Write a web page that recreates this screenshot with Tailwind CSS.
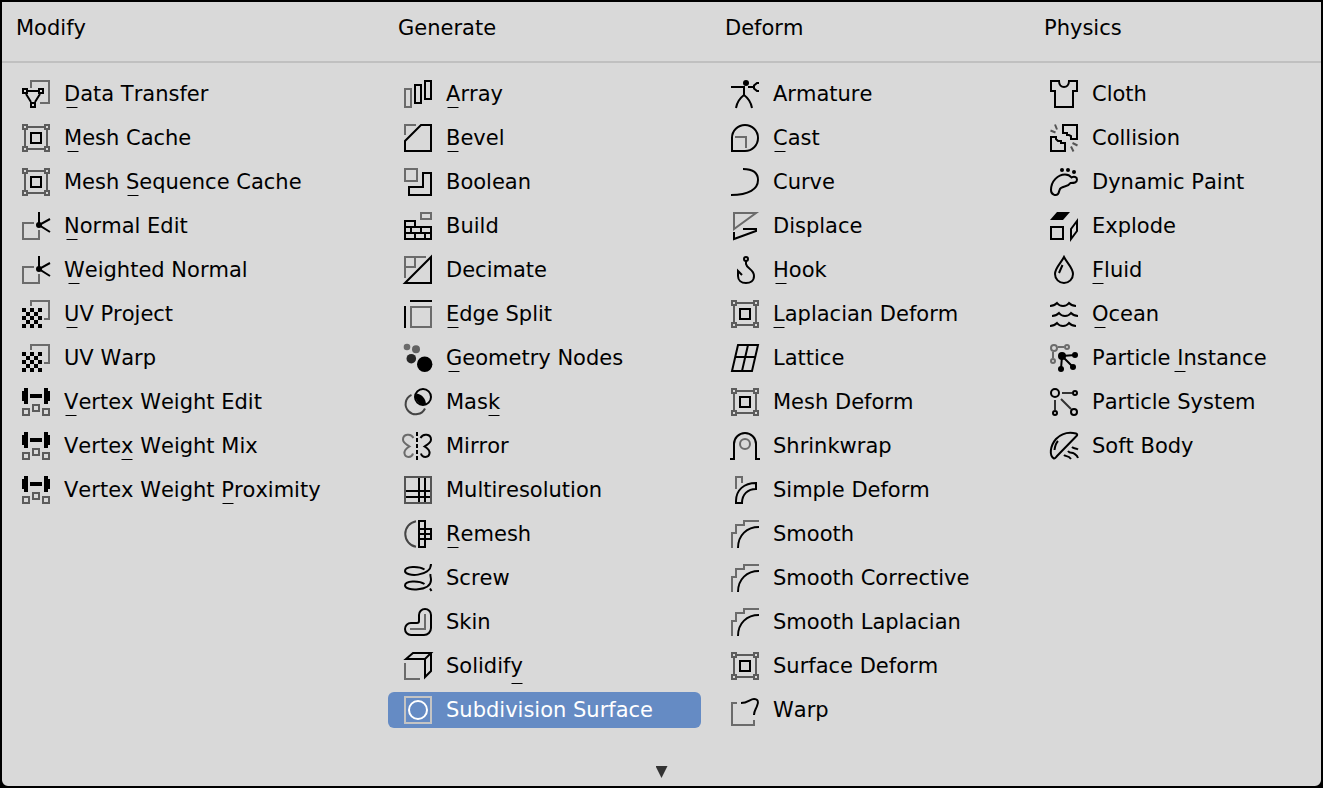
<!DOCTYPE html>
<html lang="en">
<head>
<meta charset="utf-8">
<title>Add Modifier</title>
<script src="https://cdn.jsdelivr.net/npm/@tailwindcss/browser@4"></script>
</head>
<body class="bg-black">

<!-- Icon set, 28 x 28 grid, two-pixel strokes -->
<svg class="hidden" aria-hidden="true">
  <symbol id="transfer" viewBox="0 0 28 28"><path class="stroke-[#6b6b6b]" d="M9 8V1H27V23H18"/><path d="M5 11H17M4 14L9 22M18 14L13 22"/><path d="M1 9H5V13H1ZM17 9H21V13H17ZM9 23H13V27H9Z"/></symbol>
  <symbol id="cage" viewBox="0 0 28 28"><path class="stroke-[#5c5c5c]" d="M1 1H5V5H1ZM23 1H27V5H23ZM1 23H5V27H1ZM23 23H27V27H23ZM6 3H22M6 25H22M3 6V22M25 6V22"/><path d="M9 9H19V19H9Z"/></symbol>
  <symbol id="normal" viewBox="0 0 28 28"><path class="stroke-[#6b6b6b]" d="M12 11H1V27H17V18"/><path d="M17 13V0M28 7L17 13L28 20"/><circle cx="17" cy="13" r="2" fill="currentColor"/></symbol>
  <symbol id="uv" viewBox="0 0 28 28"><path class="stroke-[#6b6b6b]" d="M9 6V1H27V19H22"/><path stroke="none" fill="currentColor" d="M0 8h4v4h-4zM8 8h4v4h-4zM16 8h4v4h-4zM4 12h4v4h-4zM12 12h4v4h-4zM0 16h4v4h-4zM8 16h4v4h-4zM16 16h4v4h-4zM4 20h4v4h-4zM12 20h4v4h-4zM0 24h4v4h-4zM8 24h4v4h-4zM16 24h4v4h-4z"/></symbol>
  <symbol id="weight" viewBox="0 0 28 28"><path stroke="none" fill="currentColor" d="M0 3H2V0H6V16H2V13H0ZM8 6H20V10H8ZM22 0H26V3H28V13H26V16H22Z"/><path class="stroke-[#5c5c5c]" d="M1 21H7V27H1ZM11 17H17V23H11ZM21 21H27V27H21Z"/></symbol>
  <symbol id="array" viewBox="0 0 28 28"><path class="stroke-[#6b6b6b]" d="M1 9H7V27H1Z"/><path d="M11 5H17V23H11ZM21 1H27V19H21Z"/></symbol>
  <symbol id="bevel" viewBox="0 0 28 28"><path class="stroke-[#6b6b6b]" d="M1 11V1H12"/><path d="M1 27V17L17 1H27V27Z"/></symbol>
  <symbol id="boolean" viewBox="0 0 28 28"><path class="stroke-[#6b6b6b]" d="M1 1H13V13H1Z"/><path d="M19 5H27V27H5V19H19Z"/></symbol>
  <symbol id="build" viewBox="0 0 28 28"><path class="stroke-[#6b6b6b]" d="M17 1H27V7H17Z"/><path d="M1 15V9H11V15M1 15H27V27H1ZM1 21H27M7 15V21M17 15V21M11 21V27M21 21V27"/></symbol>
  <symbol id="decimate" viewBox="0 0 28 28"><path class="stroke-[#6b6b6b]" d="M1 22V1H22M1 11H11V1"/><path d="M1 27L27 1V27Z"/></symbol>
  <symbol id="edgesplit" viewBox="0 0 28 28"><path class="stroke-[#6b6b6b]" d="M7 7H27V27H7Z"/><path d="M6 1H28M1 6V28"/></symbol>
  <symbol id="geometry" viewBox="0 0 28 28" stroke="none"><circle cx="3" cy="3" r="3.3" fill="#6b6b6b"/><circle cx="12" cy="5.3" r="4" fill="#626262"/><circle cx="7.3" cy="14.7" r="4.8" fill="#262626"/><circle cx="20.7" cy="20.3" r="7.7" fill="currentColor"/></symbol>
  <symbol id="mask" viewBox="0 0 28 28"><path class="stroke-[#444]" d="M7.500 6.800A10.200 10.200 0 1 0 21 20.500"/><circle cx="19" cy="9" r="8"/><path fill="currentColor" stroke="none" d="M12.500 5.500C18 6 22 11 22 16.500A8 8 0 0 1 12.500 5.500Z"/></symbol>
  <symbol id="mirror" viewBox="0 0 28 28"><path stroke-dasharray="4 2" d="M13 0V28"/><path d="M16.500 6C19 1 27 2 27 7.500C27 11 24 12 20.500 14.500C24 16.500 26 18.500 25.500 21.500C25 26 18 26 17 21.500"/><path class="stroke-[#6b6b6b]" d="M9.500 6C7 1 -1 2 -1 7.500C-1 11 2 12 5.500 14.500C2 16.500 0 18.500 .5 21.500C1 26 8 26 9 21.500"/></symbol>
  <symbol id="multires" viewBox="0 0 28 28"><path class="stroke-[#555]" d="M1 1H27V27H1Z"/><path d="M15 2V26M21 2V26M2 15H26M2 21H26"/></symbol>
  <symbol id="remesh" viewBox="0 0 28 28"><path class="stroke-[#444]" d="M12 1.200A13 13 0 0 0 12 26.800"/><path d="M15 1H21V27H15ZM15 9H27V19H15M27 9V19M15 14H27"/></symbol>
  <symbol id="screw" viewBox="0 0 28 28"><path d="M20.500 5.500C15 2 1 2 1 7C1 13 27 13 27 0M20.500 20C15 16.500 1 16.500 1 21.500C1 27.500 27 27.500 27 16C27 13 26 12 26.500 10M26 24.500L27.500 27"/></symbol>
  <symbol id="skin" viewBox="0 0 28 28"><path class="stroke-[#6b6b6b]" d="M21 6V21H6"/><path d="M21 1A6 6 0 0 1 27 7V20A7 7 0 0 1 20 27H7A6 6 0 0 1 7 15H13A2 2 0 0 0 15 13V7A6 6 0 0 1 21 1Z"/></symbol>
  <symbol id="solidify" viewBox="0 0 28 28"><path class="stroke-[#6b6b6b]" d="M1 11V27H16"/><path d="M2 7L9 1H27L21 7ZM21 7V25L27 19V1"/></symbol>
  <symbol id="subsurf" viewBox="0 0 28 28"><path class="stroke-[#c4c4c4]" d="M1 1H27V27H1Z"/><circle cx="14" cy="14" r="9"/></symbol>
  <symbol id="armature" viewBox="0 0 28 28"><circle cx="15" cy="3" r="3" fill="currentColor" stroke="none"/><path d="M0 7H13V15C9 18 6 22 5 28M13 15C17 18 20 22 21 28M17 7H22M28 3H26L23 5.500V8.500L26 11H28"/></symbol>
  <symbol id="cast" viewBox="0 0 28 28"><path class="stroke-[#6b6b6b]" d="M4 13H15V24"/><path d="M1 14A13 13 0 1 1 14 27H1Z"/></symbol>
  <symbol id="curve" viewBox="0 0 28 28"><path d="M12 1C22 1 27 5 27 12C27 21 18 27 0 27"/></symbol>
  <symbol id="displace" viewBox="0 0 28 28"><path class="stroke-[#6b6b6b]" d="M3 17V1H25Z"/><path d="M3 20V27L25 19V17H12"/></symbol>
  <symbol id="hook" viewBox="0 0 28 28"><circle cx="15" cy="3" r="2"/><path d="M15 5V8C16 13 23 13 23 20C23 25 19 27 15 27C10 27 7 24 7 20V15L11 19"/></symbol>
  <symbol id="lattice" viewBox="0 0 28 28"><path d="M7 1H27L21 27H1ZM17 1L11 27M4 13H24"/></symbol>
  <symbol id="shrinkwrap" viewBox="0 0 28 28"><circle class="stroke-[#6b6b6b]" cx="14" cy="12" r="5"/><path d="M-1 27H3V12A11 11 0 0 1 25 12V27H29"/></symbol>
  <symbol id="bend" viewBox="0 0 28 28"><path class="stroke-[#6b6b6b]" d="M5 13V1H11V7"/><path d="M5 27V25C5 14 13 7 25 7V13C17 13 11 18 11 27Z"/></symbol>
  <symbol id="smooth" viewBox="0 0 28 28"><path class="stroke-[#6b6b6b]" d="M1 28V13H5V5H13V1H28"/><path d="M7 28C7 15 16 7 28 7"/></symbol>
  <symbol id="warp" viewBox="0 0 28 28"><path class="stroke-[#6b6b6b]" d="M6 7H1V29H23V24"/><path d="M10 7C17 7 19 3 23 3C27 3 28 6 26 10C25 13 23 15 23 19"/></symbol>
  <symbol id="cloth" viewBox="0 0 28 28"><path d="M1 1H9C9 9 19 9 19 1H27V11H23V27H5V11H1Z"/></symbol>
  <symbol id="collision" viewBox="0 0 28 28"><path class="stroke-[#555]" d="M5 .5L7 5.500M.5 6.500L5.500 8.500M22.500 19L27.500 21.500M21 22.500L23.500 27.500"/><path d="M1 27V13H6V15L8 17H11V19H15V27ZM13 1H27V15H21V12L19 11H17V9H13Z"/></symbol>
  <symbol id="paint" viewBox="0 0 28 28"><g fill="currentColor" stroke="none"><circle cx="12" cy="2" r="2"/><circle cx="18" cy="2" r="2"/><circle cx="24" cy="4" r="2"/></g><path d="M1 22C1 13 8 6.500 15 6.500C18 6.500 20 7.500 21.500 9.500C24 8 27 9 27 11.500C27 15 24 15 20.500 15C18 19 14 18 11 20C9 21 9.500 24 8 26C6 28 1 27 1 22Z"/></symbol>
  <symbol id="explode" viewBox="0 0 28 28"><path fill="currentColor" stroke="none" d="M7 0H20L13 8H0Z"/><path d="M1 15H13V27H1ZM21 17L27 9V19L21 27Z"/></symbol>
  <symbol id="fluid" viewBox="0 0 28 28"><path d="M14 1C11 7 5 12 5 18A9 9 0 0 0 23 18C23 12 17 7 14 1ZM12.500 9L9 17"/></symbol>
  <symbol id="ocean" viewBox="0 0 28 28"><path d="M0 6C3 6 5 5 7 3C10 7 16 7 19 3C21 5 23 6 26 6M2 16C5 16 7 15 9 13C12 17 18 17 21 13C23 15 25 16 28 16M0 26C3 26 5 25 7 23C10 27 16 27 19 23C21 25 23 26 26 26"/></symbol>
  <symbol id="instance" viewBox="0 0 28 28"><g class="stroke-[#6b6b6b]"><circle cx="4" cy="4" r="3"/><circle cx="17" cy="3" r="2"/><circle cx="3" cy="17" r="2"/><path d="M8 3H14M3 8V14"/></g><path d="M12 12L25 11M12 12L23 23M12 12L11 25"/><g fill="currentColor" stroke="none"><circle cx="12" cy="12" r="4"/><circle cx="25" cy="11" r="3"/><circle cx="23" cy="23" r="3"/><circle cx="11" cy="25" r="3"/></g></symbol>
  <symbol id="particles" viewBox="0 0 28 28"><path class="stroke-[#333]" d="M12 5H22M5 12V22M11 11L21 21"/><circle cx="5" cy="5" r="4"/><circle cx="25" cy="5" r="2"/><circle cx="5" cy="25" r="2"/><circle cx="24" cy="24" r="3"/></symbol>
  <symbol id="softbody" viewBox="0 0 28 28"><path d="M4 26.500C-1 24 0 14 6 7C12 1 20 0 26 1.500C27.500 2 27.500 3 26.500 4L8 23C6 25 5 27 4 26.500ZM8 9C6 11 5 14 4.500 18M22 15C24 17 26 16 28 17.500M18 19C20 22 22 20 24 21.500C26 23 27 23 28 26M14 23C16 25 18 23 21 27"/></symbol>
</svg>

<main class="flex min-h-screen flex-col overflow-hidden rounded-b-lg border-2 border-black bg-[#d9d9d9] font-['DejaVu_Sans',sans-serif] text-[21px] leading-7 text-black [font-kerning:none] [&_svg]:size-7 [&_svg]:shrink-0 [&_svg]:overflow-visible [&_svg]:fill-none [&_svg]:stroke-current [&_svg]:stroke-2 [&_u]:relative [&_u]:no-underline [&_u]:after:absolute [&_u]:after:top-[25px] [&_u]:after:left-1/2 [&_u]:after:h-px [&_u]:after:w-[11px] [&_u]:after:-translate-x-1/2 [&_u]:after:bg-black">
  <header class="grid grid-cols-[368fr_313fr_305fr_273fr] gap-x-[14px] border-b-2 border-[#c0c0c0] pt-2 pr-[14px] pb-[15px] pl-1 *:flex *:h-9 *:items-center *:pl-[10px]">
    <h2 id="h-modify">Modify</h2>
    <h2 id="h-generate">Generate</h2>
    <h2 id="h-deform">Deform</h2>
    <h2 id="h-physics">Physics</h2>
  </header>

  <div class="grid grid-cols-[368fr_313fr_305fr_273fr] gap-x-[14px] pt-[13px] pr-[14px] pl-1 *:flex *:flex-col *:gap-2 [&_button]:flex [&_button]:h-9 [&_button]:items-center [&_button]:gap-[14px] [&_button]:rounded-md [&_button]:pl-4 [&_button]:whitespace-nowrap">
    <section aria-labelledby="h-modify">
      <button><svg><use href="#transfer"/></svg><span><u>D</u>ata Transfer</span></button>
      <button><svg><use href="#cage"/></svg><span><u>M</u>esh Cache</span></button>
      <button><svg><use href="#cage"/></svg><span>Mesh <u>S</u>equence Cache</span></button>
      <button><svg><use href="#normal"/></svg><span><u>N</u>ormal Edit</span></button>
      <button><svg><use href="#normal"/></svg><span><u>W</u>eighted Normal</span></button>
      <button><svg><use href="#uv"/></svg><span><u>U</u>V Project</span></button>
      <button><svg><use href="#uv"/></svg><span>UV Warp</span></button>
      <button><svg><use href="#weight"/></svg><span><u>V</u>ertex Weight Edit</span></button>
      <button><svg><use href="#weight"/></svg><span>Verte<u>x</u> Weight Mix</span></button>
      <button><svg><use href="#weight"/></svg><span>Vertex Weight <u>P</u>roximity</span></button>
    </section>
    <section aria-labelledby="h-generate">
      <button><svg><use href="#array"/></svg><span><u>A</u>rray</span></button>
      <button><svg><use href="#bevel"/></svg><span><u>B</u>evel</span></button>
      <button><svg><use href="#boolean"/></svg><span>Boolean</span></button>
      <button><svg><use href="#build"/></svg><span>Build</span></button>
      <button><svg><use href="#decimate"/></svg><span>Decimate</span></button>
      <button><svg><use href="#edgesplit"/></svg><span><u>E</u>dge Split</span></button>
      <button><svg><use href="#geometry"/></svg><span><u>G</u>eometry Nodes</span></button>
      <button><svg><use href="#mask"/></svg><span>Mas<u>k</u></span></button>
      <button><svg><use href="#mirror"/></svg><span>Mirror</span></button>
      <button><svg><use href="#multires"/></svg><span>Multiresolution</span></button>
      <button><svg><use href="#remesh"/></svg><span><u>R</u>emesh</span></button>
      <button><svg><use href="#screw"/></svg><span>Screw</span></button>
      <button><svg><use href="#skin"/></svg><span>Skin</span></button>
      <button><svg><use href="#solidify"/></svg><span>Solidif<u class="after:mt-1">y</u></span></button>
      <button class="bg-[#658bc4] text-white"><svg><use href="#subsurf"/></svg><span>Subdivision Surface</span></button>
    </section>
    <section aria-labelledby="h-deform">
      <button><svg><use href="#armature"/></svg><span>Armature</span></button>
      <button><svg><use href="#cast"/></svg><span><u>C</u>ast</span></button>
      <button><svg><use href="#curve"/></svg><span>Curve</span></button>
      <button><svg><use href="#displace"/></svg><span>Displace</span></button>
      <button><svg><use href="#hook"/></svg><span><u>H</u>ook</span></button>
      <button><svg><use href="#cage"/></svg><span><u>L</u>aplacian Deform</span></button>
      <button><svg><use href="#lattice"/></svg><span>Lattice</span></button>
      <button><svg><use href="#cage"/></svg><span>Mesh Deform</span></button>
      <button><svg class="[&_use]:overflow-visible"><use href="#shrinkwrap"/></svg><span>Shrinkwrap</span></button>
      <button><svg><use href="#bend"/></svg><span>Simple Deform</span></button>
      <button><svg><use href="#smooth"/></svg><span>Smooth</span></button>
      <button><svg><use href="#smooth"/></svg><span>Smooth Corrective</span></button>
      <button><svg><use href="#smooth"/></svg><span>Smooth Laplacian</span></button>
      <button><svg><use href="#cage"/></svg><span>Surface Deform</span></button>
      <button><svg><use href="#warp"/></svg><span>Warp</span></button>
    </section>
    <section aria-labelledby="h-physics">
      <button><svg><use href="#cloth"/></svg><span>Cloth</span></button>
      <button><svg><use href="#collision"/></svg><span>Collision</span></button>
      <button><svg><use href="#paint"/></svg><span>Dynamic Paint</span></button>
      <button><svg><use href="#explode"/></svg><span>Explode</span></button>
      <button><svg><use href="#fluid"/></svg><span><u>F</u>luid</span></button>
      <button><svg><use href="#ocean"/></svg><span><u>O</u>cean</span></button>
      <button><svg><use href="#instance"/></svg><span>Particle <u>I</u>nstance</span></button>
      <button><svg><use href="#particles"/></svg><span>Particle System</span></button>
      <button><svg><use href="#softbody"/></svg><span>Soft Body</span></button>
    </section>
  </div>

  <button class="mx-auto mt-auto mb-2 h-3 w-3 bg-[#333] [clip-path:polygon(0_0,100%_0,50%_100%)]" aria-label="Scroll down"></button>
</main>

<script>
  // Some icons draw slightly past their 28 x 28 grid.
  document.querySelectorAll('symbol').forEach(s => s.setAttribute('overflow', 'visible'));
</script>
</body>
</html>
